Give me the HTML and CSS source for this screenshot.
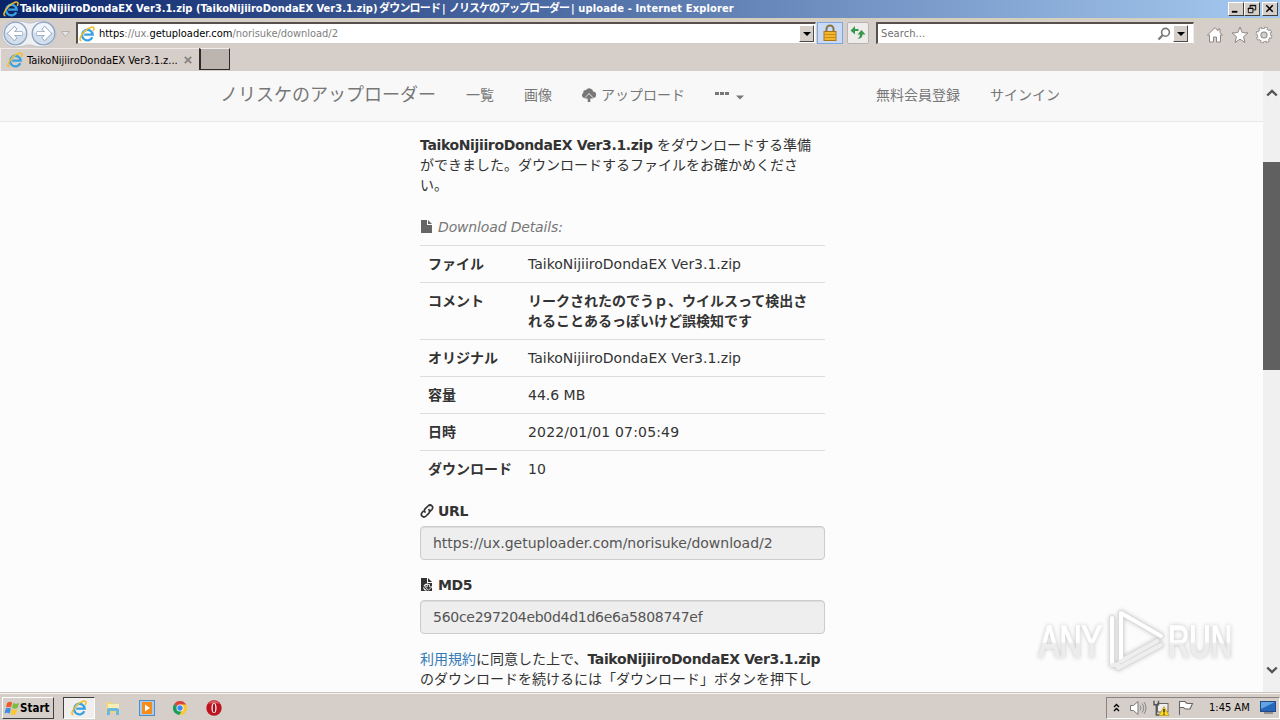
FILE: index.html
```
<!DOCTYPE html>
<html lang="ja">
<head>
<meta charset="utf-8">
<title>ノリスケのアップローダー</title>
<link rel="stylesheet" href="styles.css">
</head>
<body>
<svg class="defs" width="0" height="0">
  <symbol id="ie" viewBox="0 0 16 16">
    <path d="M13.300 11.200A5.300 5.300 0 1 1 13.700 8.600H5.200" fill="none" stroke="#3ba0e0" stroke-width="2.300"/>
    <path d="M4 7.200A4.400 4.400 0 0 1 8 3.900" fill="none" stroke="#9adcff" stroke-width="1"/>
    <path d="M2.400 14.800C-.6 14.600 1.400 9.300 6 5S14.800 .1 15 2.200C15.100 3 14.700 4 14.200 4.900" fill="none" stroke="#f0bd25" stroke-width="1.500"/>
  </symbol>
</svg>
<div class="screen">
  <header class="titlebar">
    <svg class="title-icon"><use href="#ie"/></svg>
    <div class="title"><span class="t1">TaikoNijiiroDondaEX Ver3.1.zip (TaikoNijiiroDondaEX Ver3.1.zip)</span><span class="t2">ダウンロード</span><span class="t3">|</span><span class="t4">ノリスケのアップローダー</span><span class="t5">| uploade - Internet Explorer</span></div>
    <div class="winbtns">
      <svg class="wb" viewBox="0 0 15 13"><path d="M3 9.500h6" stroke="#000" stroke-width="2"/></svg>
      <svg class="wb" viewBox="0 0 15 13"><path d="M5.500 5V2.500h6v5H9M5 3h7M3.500 5.500h5v5h-5zM3 6h6" fill="none" stroke="#000"/></svg>
      <svg class="wb last" viewBox="0 0 15 13"><path d="M3.500 2.500l7 7m0-7l-7 7" stroke="#000" stroke-width="1.700"/></svg>
    </div>
  </header>
  <div class="addressbar">
    <svg class="navbtns" viewBox="0 0 74 28">
      <path d="M15 1C25 1 25 3 30 3S35 1 43 1a13 13 0 0 1 0 26C34 27 34 25 29 25S24 27 15 27A13 13 0 0 1 15 1z" fill="#eef0f4" stroke="#c3c4cb"/>
      <g fill="#d3deed" stroke="#8ea3bd" stroke-width="1.300"><circle cx="15.500" cy="13.500" r="11.300"/><circle cx="43.500" cy="13.500" r="11.300"/></g>
      <path d="M5.500 12.500a10 9.500 0 0 1 20 0zM33.500 12.500a10 9.500 0 0 1 20 0z" fill="#f0f5fb"/>
      <g transform="translate(.5 -.5)" fill="none" stroke="#93a6bf" stroke-width="4.600"><path d="M22 14H10M15.500 8l-6 6 6 6M36 14h12M42.500 8l6 6-6 6"/></g>
      <g transform="translate(.5 -.5)" fill="none" stroke="#fff" stroke-width="3.200"><path d="M21.500 14H10M15 8.500L9.500 14l5.500 5.500M36.500 14H48M43 8.500l5.500 5.500-5.500 5.500"/></g>
      <path d="M61.500 11.500h8l-4 5z" fill="#e8e6e3" stroke="#aaa6a2" stroke-width=".8"/>
    </svg>
    <div class="field url">
      <svg class="i16"><use href="#ie"/></svg>
      <div class="urltext"><b>https</b>://ux.<b>getuploader.com</b>/norisuke/download/2</div>
      <span class="drop"></span>
    </div>
    <div class="lock"><svg viewBox="0 0 16 18"><path d="M4.500 8V5a3.500 3.500 0 0 1 7 0v3" fill="none" stroke="#8a7542" stroke-width="2"/><rect x="2" y="7.500" width="12" height="9" fill="#f3b62a" stroke="#a97517"/><path d="M2 10.500h12M2 13.500h12" stroke="#c98b1c"/></svg></div>
    <div class="refresh"><svg viewBox="0 0 16 16"><path d="M.5 6l4-4.500v3h4v2h-4V10zM15.500 9.500l-4-4v2.500H8.500v5l1 1.500h1.500V14z" fill="none"/><path d="M.5 5.500L5 1v3h3.500v2H5v3.500zM15.500 9.500L11.500 5l-4 4.500h2.500q0 3-2.500 4.500 5-.5 5-4.500z" fill="#35984a"/></svg></div>
    <div class="field search"><span class="ph">Search...</span>
      <svg class="mag" viewBox="0 0 14 14"><circle cx="8.500" cy="5.300" r="3.900" fill="none" stroke="#777" stroke-width="1.600"/><path d="M5.500 8.300L1.500 12.500" stroke="#777" stroke-width="2.200"/></svg>
      <span class="drop"></span></div>
    <div class="tools">
      <svg viewBox="0 0 18 18"><path d="M9 1.700L1.500 9h2v7h4v-5h3v5h4V9h2L14 6.700V3h-2v1.700z" fill="#fff" stroke="#8b8783"/></svg>
      <svg viewBox="0 0 18 18"><path d="M9 1l2.200 5.600 5.800.4-4.500 3.700 1.500 5.800L9 13.200l-5 3.300 1.500-5.800L1 7l5.800-.4z" fill="#fff" stroke="#8b8783"/></svg>
      <svg viewBox="0 0 18 18"><circle cx="9" cy="9" r="6.800" fill="none" stroke="#8b8783" stroke-width="3" stroke-dasharray="3.200 2.140"/><circle cx="9" cy="9" r="4.800" fill="none" stroke="#8b8783" stroke-width="4.400"/><circle cx="9" cy="9" r="6.800" fill="none" stroke="#fff" stroke-width="1.600" stroke-dasharray="2 3.340" stroke-dashoffset="-.6"/><circle cx="9" cy="9" r="4.900" fill="none" stroke="#fff" stroke-width="2.600"/></svg>
    </div>
  </div>
  <div class="tabs">
    <div class="tab"><svg class="i16"><use href="#ie"/></svg><span class="tabtext">TaikoNijiiroDondaEX Ver3.1.z...</span><svg class="tabx" viewBox="0 0 8 8"><path d="M.8.8l6.400 6.400m0-6.400L.8 7.200" stroke="#8a8581" stroke-width="1.900"/></svg></div>
    <div class="newtab"></div>
  </div>
  <div class="viewport">
    <main class="page">
      <nav class="navbar">
        <span class="brand">ノリスケのアップローダー</span>
        <span class="item">一覧</span>
        <span class="item">画像</span>
        <span class="item up"><svg viewBox="0 0 14 14"><path d="M2.500 10A2.700 2.700 0 0 1 1.300 5 2.700 2.700 0 0 1 4 2 4 4 0 0 1 11.200 3.500a3.300 3.300 0 0 1 .5 6.500L7 5z" fill="#777"/><path d="M7 6l4.500 4.600H8.300V14H5.700v-3.400H2.500z" fill="#777"/></svg><span>アップロード</span></span>
        <span class="item more"><svg viewBox="0 0 29 14"><path d="M0 4h4v3H0zM5 4h4v3H5zM10 4h4v3h-4z" fill="#777"/><path d="M21 7.500h8l-4 4z" fill="#777"/></svg></span>
        <span class="item join">無料会員登録</span>
        <span class="item">サインイン</span>
      </nav>
      <div class="content">
        <p class="lead"><b class="lb">TaikoNijiiroDondaEX Ver3.1.zip</b> をダウンロードする準備<br>ができました。ダウンロードするファイルをお確かめくださ<br>い。</p>
        <div class="legend"><svg class="gi" viewBox="0 0 14 14"><path d="M1 0h6v5h5v8H1zM8 0l4 4H8z" fill="#666"/></svg><i>Download Details:</i></div>
        <div class="details">
          <div class="row"><b>ファイル</b><span class="la">TaikoNijiiroDondaEX Ver3.1.zip</span></div>
          <div class="row"><b>コメント</b><b>リークされたのでうｐ、ウイルスって検出さ<br>れることあるっぽいけど誤検知です</b></div>
          <div class="row"><b>オリジナル</b><span class="la">TaikoNijiiroDondaEX Ver3.1.zip</span></div>
          <div class="row"><b>容量</b><span class="la">44.6 MB</span></div>
          <div class="row"><b>日時</b><span class="la date">2022/01/01 07:05:49</span></div>
          <div class="row"><b>ダウンロード</b><span class="la">10</span></div>
        </div>
        <div class="label"><svg class="gi" viewBox="0 0 14 14"><g fill="none" stroke="#333" stroke-width="1.700"><path d="M5.500 8.600C3.800 7 4.200 5.800 5.300 4.700L8 2c1.300-1.200 2.800-1.200 3.900-.2s1.100 2.500 0 3.700L9.800 7.600"/><path d="M8.500 5.200C10.200 7 9.800 8.200 8.700 9.300L6 12c-1.300 1.200-2.800 1.200-3.900.2S1 9.700 2.100 8.500l1.600-1.600"/></g></svg><b class="lb">URL</b></div>
        <div class="input la">https://ux.getuploader.com/norisuke/download/2</div>
        <div class="label"><svg class="gi" viewBox="0 0 14 14"><path d="M1 0h6v5h5v8H1zM8 0l4 4H8z" fill="#333"/><path d="M4 8.200Q5 6 8 6.200M3.500 9.500q.5 2.500 3 2.800" fill="none" stroke="#fcfcfc" stroke-width="1.200"/><path d="M7.300 6.500h2.200v2.300H12l-3.600 3.400L5 8.800h2.300z" fill="#333" stroke="#fcfcfc" stroke-width=".8"/></svg><b class="lb">MD5</b></div>
        <div class="input la md5">560ce297204eb0d4d1d6e6a5808747ef</div>
        <p class="terms"><a>利用規約</a>に同意した上で、<b class="lb">TaikoNijiiroDondaEX Ver3.1.zip</b><br>のダウンロードを続けるには「ダウンロード」ボタンを押下し<br>てからすすんで</p>
      </div>
    </main>
    <aside class="scrollbar">
      <svg class="chev" viewBox="0 0 12 8"><path d="M1.200 6.500L6 1.900l4.800 4.600" fill="none" stroke="#555" stroke-width="2.400"/></svg>
      <div class="thumb"></div>
      <svg class="chev bottom" viewBox="0 0 12 8"><path d="M1.200 1.500L6 6.100l4.800-4.600" fill="none" stroke="#555" stroke-width="2.400"/></svg>
    </aside>
    <svg class="watermark" viewBox="0 0 220 76">
      <defs><linearGradient id="wg" x1="0" y1="0" x2="0" y2="1"><stop offset=".5" stop-color="#fff"/><stop offset=".55" stop-color="#ececec"/></linearGradient></defs>
      <g class="wmtext" fill="url(#wg)" stroke="url(#wg)" stroke-width="1.600">
        <text x="9" y="54" textLength="63" lengthAdjust="spacingAndGlyphs">ANY</text>
        <text x="138" y="54" textLength="64" lengthAdjust="spacingAndGlyphs">RUN</text>
      </g>
      <g fill="none" stroke-linejoin="round" stroke-linecap="round" transform="translate(0 2)">
        <path d="M82 13v47h4l2-1M88 63L131 40M131 31L91 8v48L127 36" stroke="#dadada" stroke-width="5.500"/>
        <path d="M91 56V8L131 31M82 60V13" stroke="#fff" stroke-width="4"/>
        <path d="M91 56L127 36M82 60h4l2-1M88 63L131 40" stroke="#eee" stroke-width="4"/>
      </g>
    </svg>
  </div>
  <footer class="taskbar">
    <div class="start"><svg viewBox="0 0 16 16"><path d="M3 3Q6 1 8 2.500L7 7.500Q4.500 6 2 7.500z" fill="#ee5b2b"/><path d="M9 3q3 1.500 6 0l-1.500 5q-3 1.500-5.500 0z" fill="#7dbb42"/><path d="M1.800 8.500q2.700-1.500 5 0l-1 5q-3-1.500-5.300 0z" fill="#3c8fe0"/><path d="M7.800 9q3 1.500 5.500.2l-1.500 5q-2.500 1.500-5 0z" fill="#fbc62f"/></svg><b>Start</b></div>
    <div class="taskactive"><svg class="i16"><use href="#ie"/></svg></div>
    <div class="quick">
      <svg viewBox="0 0 18 18"><path d="M2 3h5l1 1.500h7V14H2z" fill="#ecd583"/><path d="M4 5h11v7H4z" fill="#f9eeb5"/><path d="M3 16v-5q0-2 2-2h8q2 0 2 2v5h-3v-4H6v4z" fill="#68b8df"/></svg>
      <svg viewBox="0 0 18 18"><rect x="1.500" y="1.500" width="15" height="15" fill="#a7cdec" stroke="#4d8cc4"/><rect x="4" y="3" width="10" height="12" fill="#f58b1b"/><path d="M7 5.500v7l5-3.500z" fill="#fff"/></svg>
      <svg viewBox="0 0 18 18"><path d="M9 9L3 5.300A7 7 0 0 1 15.200 5.600z" fill="#dc4437"/><path d="M9 9L3 5.300A7 7 0 0 0 8.500 16L12 10z" fill="#1a9d58"/><path d="M9 5.600h6.200A7 7 0 0 1 8.500 16L12 10z" fill="#fbc92e"/><circle cx="9" cy="9" r="3.500" fill="#fff"/><circle cx="9" cy="9" r="2.700" fill="#4285f4"/></svg>
      <svg viewBox="0 0 18 18"><circle cx="9" cy="9" r="7.700" fill="#bd1420"/><path d="M3 5a7.500 7.500 0 0 1 12 0q-6-2-12 0z" fill="#db6267"/><ellipse cx="9" cy="9" rx="2.500" ry="5" fill="#fff"/><ellipse cx="9" cy="9" rx="1.300" ry="4.500" fill="#a7101a"/></svg>
    </div>
    <div class="tray">
      <svg class="up2" viewBox="0 0 7 9"><path d="M1 4l2.500-2.500L6 4M1 8l2.500-2.500L6 8" fill="none" stroke="#000" stroke-width="1.400"/></svg>
      <svg class="snd" viewBox="0 0 18 16"><path d="M1.500 5.500h3L9 1.500v13l-4.500-4h-3z" fill="#fff" stroke="#777"/><path d="M11 5.500q2 2.500 0 5M13 3.500q3.500 4.500 0 9M15 2q4 6 0 12" fill="none" stroke="#888"/></svg>
      <svg class="net" viewBox="0 0 17 16"><rect x="4.500" y="3.500" width="10.500" height="8.500" fill="#eee" stroke="#666"/><path d="M1 .8v4h4.500v-4M3.300 5v10h3" fill="none" stroke="#555" stroke-width="1.400"/><path d="M11 6.500l5 9H6z" fill="#ffdb20" stroke="#b89412" stroke-width=".7"/><path d="M11 9v3.500m0 1v1.200" stroke="#000" stroke-width="1.200"/></svg>
      <svg class="flag" viewBox="0 0 17 16"><path d="M2.500 15V1.500H8q1 2 3 2h4.500L13 9H9q-1.500 0-2.500-1.500h-4" fill="#fff" stroke="#666" stroke-width="1.100"/></svg>
      <span class="clock">1:45 AM</span>
      <svg class="desk" viewBox="0 0 16 13"><rect x=".5" y=".5" width="15" height="10" fill="#2467bd" stroke="#244a80"/><path d="M1 1h14L1 8z" fill="#63a2e6"/><path d="M4 12h9" stroke="#555"/></svg>
    </div>
  </footer>
</div>
</body>
</html>
```
FILE: styles.css
```
* { box-sizing: border-box; }
body { margin: 0; overflow: hidden; }
svg { display: block; flex: none; }
.defs { position: absolute; }
.screen { width: 1280px; height: 720px; display: flex; flex-direction: column; background: #d6cec9; font-family: "DejaVu Sans Condensed", "DejaVu Sans", "Noto Sans CJK JP", sans-serif; font-size: 11px; overflow: hidden; }

.titlebar { height: 18px; flex: none; display: flex; align-items: center; padding: 0 2px 0 3px; background: linear-gradient(90deg, #0a246a, #a6caf0); color: #fff; }
.title-icon { width: 16px; height: 16px; }
.title { display: flex; flex: 1; margin-left: 1px; font-weight: bold; font-size: 11px; line-height: 16px; white-space: nowrap; }
.t1 { width: 359px; letter-spacing: .02px; }
.t2 { width: 63px; letter-spacing: -0.8px; }
.t3 { width: 7px; }
.t4 { width: 122px; letter-spacing: -1px; }
.t5 { letter-spacing: .14px; }
.winbtns { display: flex; }
.wb { width: 16px; height: 14px; background: #d6cec9; border: 1px solid; border-color: #fff #404040 #404040 #fff; }
.wb.last { margin-left: 2px; }

.addressbar { height: 30px; flex: none; display: flex; align-items: flex-start; border-top: 2px solid #d5d0bd; }
.navbtns { width: 74px; height: 28px; }
.field { display: flex; align-items: center; height: 22px; margin-top: 2px; background: #fff; border: 1px solid; border-color: #57504c #eee #d4ccc7 #57504c; border-top-width: 2px; border-left-width: 2px; }
.i16 { width: 16px; height: 16px; }
.url { width: 740px; margin-left: 2px; padding: 0 1px 0 1px; }
.urltext { flex: 1; margin-left: 4px; color: #808080; font-size: 11px; letter-spacing: -.03px; }
.urltext b { font-weight: normal; color: #000; }
.drop { width: 15px; height: 17px; background: #d6cec9; border: 1px solid; border-color: #fff #504b48 #504b48 #fff; display: flex; align-items: center; justify-content: center; }
.drop::before { content: ""; border: 4px solid transparent; border-top-color: #000; border-bottom: 0; }
.lock { width: 26px; height: 22px; margin: 2px 0 0 1px; border: 1px solid #80a8e0; background: #c8daf5; display: flex; align-items: center; justify-content: center; }
.lock svg { width: 16px; height: 18px; }
.refresh { width: 22px; height: 22px; margin: 2px 0 0 4px; border: 1px solid #b9b4b0; border-radius: 2px; background: #eeecea; display: flex; align-items: center; justify-content: center; }
.refresh svg { width: 16px; height: 16px; }
.search { width: 318px; margin-left: 7px; padding: 0 5px 0 3px; }
.ph { flex: 1; color: #707070; letter-spacing: .1px; }
.mag { width: 14px; height: 14px; margin-right: 2px; }
.tools { display: flex; gap: 6.500px; margin: 6px 0 0 12px; }
.tools svg { width: 18px; height: 18px; }

.tabs { height: 23px; flex: none; display: flex; }
.tab { width: 199px; display: flex; align-items: center; padding-left: 6px; border-top: 1px solid #eeeae7; border-left: 1px solid #eee; }
.tabtext { width: 154px; margin-left: 4px; color: #000; white-space: nowrap; }
.tabx { width: 8px; height: 8px; margin-left: 3px; }
.newtab { width: 31px; height: 22px; background: #bcb4af; border: 1px solid #2e2a28; border-width: 1px 1px 1px 2px; border-top-color: #eee; }

.viewport { height: 621px; flex: none; display: flex; position: relative; background: #fcfcfc; overflow: hidden; }
.page { flex: 1; font-family: "DejaVu Sans", "Noto Sans CJK JP", sans-serif; font-size: 14px; line-height: 20px; color: #333; }
.navbar { height: 51px; display: flex; align-items: center; padding: 0 0 3px 205px; background: #f8f8f8; border-bottom: 1px solid #e7e7e7; color: #777; white-space: nowrap; }
.brand { padding: 0 15px; font-size: 18px; width: 246px; }
.item { padding: 0 15px; }
.up { display: flex; align-items: center; gap: 5px; }
.up svg { width: 14px; height: 14px; }
.more svg { width: 29px; height: 14px; }
.join { margin-left: 102px; }
.content { width: 405px; margin-left: 420px; white-space: nowrap; }
.content p { margin: 0; }
.lead { padding-top: 13px; }
.la { font-size: 14px; letter-spacing: -.01px; }
.date { letter-spacing: .17px; }
.lb { font-size: 14px; letter-spacing: -.36px; }
.legend { display: flex; align-items: center; gap: 4px; height: 20px; margin: 22px 0 8px; color: #777; letter-spacing: -.15px; }
.gi { width: 14px; height: 14px; }
.details { margin-bottom: 14px; }
.row { display: grid; grid-template-columns: 100px 1fr; padding: 8px; border-top: 1px solid #ddd; }
.label { display: flex; align-items: center; gap: 4px; height: 20px; margin-bottom: 5px; }
.input { height: 34px; padding: 6px 12px; margin-bottom: 15px; border: 1px solid #ccc; border-radius: 4px; background: #eee; box-shadow: inset 0 1px 1px rgba(0,0,0,.075); color: #555; }
.md5 { letter-spacing: -.28px; }
.terms a { color: #337ab7; }
.scrollbar { width: 17px; background: #f0f0f0; display: flex; flex-direction: column; align-items: center; padding: 18px 0; }
.chev { width: 12px; height: 8px; }
.thumb { width: 17px; height: 208px; margin-top: 65px; background: #606060; }
.bottom { margin-top: auto; }
.watermark { position: absolute; left: 1030px; top: 532px; width: 220px; height: 76px; filter: drop-shadow(0 0 2px rgba(0,0,0,.22)); }
.wmtext { font-family: "Liberation Sans Narrow", "Liberation Sans", sans-serif; font-size: 45px; }

.taskbar { height: 28px; flex: none; display: flex; align-items: center; padding: 3px 0 1px 2px; background: #d6cec9; border-top: 1px solid #c9c3b9; box-shadow: inset 0 1px #f7f5f2; }
.start { width: 52px; height: 22px; display: flex; align-items: center; gap: 0; padding-left: 1px; border: 1px solid; border-color: #fff #404040 #404040 #fff; font-size: 11.500px; }
.start svg { width: 16px; height: 16px; }
.taskactive { width: 32px; height: 22px; margin-left: 9px; display: flex; align-items: center; justify-content: center; background: #f1efed; border: 1px solid; border-color: #404040 #fff #fff #404040; }
.quick { display: flex; gap: 15.700px; margin-left: 9px; }
.quick svg { width: 18px; height: 18px; }
.tray { width: 174px; height: 22px; margin-left: auto; display: flex; align-items: center; border: 1px solid; border-color: #8a8480 #fff #fff #8a8480; padding-left: 6px; }
.up2 { width: 7px; height: 9px; }
.snd { width: 18px; height: 16px; margin-left: 9px; }
.net { width: 17px; height: 16px; margin-left: 6px; }
.flag { width: 17px; height: 16px; margin-left: 7px; }
.clock { width: 43px; margin-left: 15px; white-space: nowrap; }
.desk { width: 16px; height: 13px; margin-left: 8px; }
```
